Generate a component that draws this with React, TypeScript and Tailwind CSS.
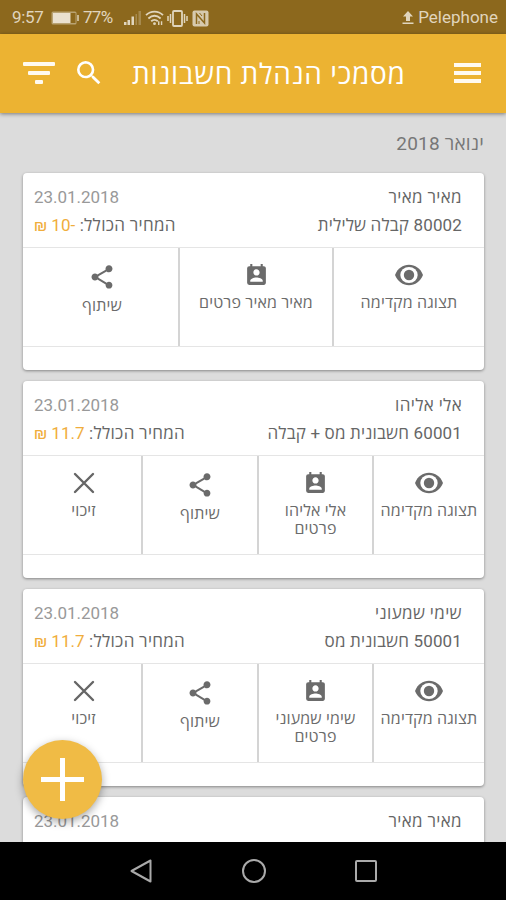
import type { ReactNode } from "react";
import { MdPermContactCalendar, MdSearch, MdShare } from "react-icons/md";

type Action = { kind: "view" | "contact" | "share" | "credit"; label: string };

type Doc = {
  id: number;
  name: string;
  date: string;
  title?: string;
  price?: string;
  actions?: Action[];
};

const documents: Doc[] = [
  {
    id: 1,
    name: "מאיר מאיר",
    date: "23.01.2018",
    title: "80002 קבלה שלילית",
    price: "₪ 10-",
    actions: [
      { kind: "view", label: "תצוגה מקדימה" },
      { kind: "contact", label: "מאיר מאיר פרטים" },
      { kind: "share", label: "שיתוף" },
    ],
  },
  {
    id: 2,
    name: "אלי אליהו",
    date: "23.01.2018",
    title: "60001 חשבונית מס + קבלה",
    price: "₪ 11.7",
    actions: [
      { kind: "view", label: "תצוגה מקדימה" },
      { kind: "contact", label: "אלי אליהו פרטים" },
      { kind: "share", label: "שיתוף" },
      { kind: "credit", label: "זיכוי" },
    ],
  },
  {
    id: 3,
    name: "שימי שמעוני",
    date: "23.01.2018",
    title: "50001 חשבונית מס",
    price: "₪ 11.7",
    actions: [
      { kind: "view", label: "תצוגה מקדימה" },
      { kind: "contact", label: "שימי שמעוני פרטים" },
      { kind: "share", label: "שיתוף" },
      { kind: "credit", label: "זיכוי" },
    ],
  },
  { id: 4, name: "מאיר מאיר", date: "23.01.2018" },
];

function EyeIcon() {
  return (
    <svg width="28" height="22" viewBox="0 0 28 22">
      <path d="M0 11C2.5 4.5 8 .8 14 .8S25.5 4.5 28 11C25.5 17.5 20 21.2 14 21.2S2.5 17.5 0 11Z" fill="#6b6b6b" />
      <ellipse cx="14" cy="11" rx="8.700" ry="8" fill="#fff" />
      <circle cx="14" cy="11" r="5.200" fill="#6b6b6b" />
    </svg>
  );
}

function CrossIcon() {
  return (
    <svg width="22" height="22" viewBox="0 0 22 22" stroke="#666" strokeWidth="2.4" strokeLinecap="round">
      <path d="M2 2l18 18M20 2L2 20" />
    </svg>
  );
}

const icons: Record<Action["kind"], ReactNode> = {
  view: <EyeIcon />,
  contact: <MdPermContactCalendar size={25} />,
  share: <MdShare size={28} className="mt-[3px]" />,
  credit: <CrossIcon />,
};

function StatusBar() {
  return (
    <div dir="ltr" className="flex h-[34px] shrink-0 items-center bg-[#8c681d] pt-[2px] pr-[8px] pl-[12px] text-[17px] text-[#e0d5bd]">
      <span className="w-[39px] tracking-[-0.3px]">9:57</span>
      <svg width="29" height="14" viewBox="0 0 29 14">
        <rect x=".5" y=".5" width="25" height="13" rx="1.5" fill="#b9a373" />
        <rect x="2" y="2" width="17" height="10" fill="#eae1cf" />
        <rect x="20" y="2" width="4.500" height="10" fill="#8c681d" />
        <path d="M26 4h2v6h-2z" fill="#c9b893" />
      </svg>
      <span className="ml-[3px] w-[41px] tracking-[-0.7px]">77%</span>
      <svg width="18" height="16" viewBox="0 0 18 16" fill="#e0d5bd">
        <path d="M0 12h2.500v3H0zM3.500 10H6v5H3.500zM7.500 6.500H10V15H7.500z" />
        <path d="M11.500 4H13v11h-1.500zM14.500 1H17v14h-2.500z" fill="#a68a4f" />
      </svg>
      <svg className="ml-[3px]" width="19" height="16" viewBox="0 0 20 17" fill="none" stroke="#e0d5bd" strokeWidth="2">
        <path d="M1 5.500C6 .5 14 .5 19 5.500M3.500 9c4-3.500 9-3.500 13 0M6.500 12c2-1.800 5-1.800 7 0" />
        <circle cx="10" cy="14.500" r="1.500" fill="#e0d5bd" stroke="none" />
        <path d="M14.500 12v4M17.500 12v4" strokeWidth="1.500" />
      </svg>
      <svg className="ml-[3px]" width="21" height="17" viewBox="0 0 21 17" fill="none" stroke="#e0d5bd" strokeWidth="1.800">
        <rect x="6" y="1" width="9" height="15" rx="1" />
        <path d="M3.500 4v9M1 6v5M17.500 4v9M20 6v5" strokeWidth="1.500" />
      </svg>
      <svg className="ml-[4px]" width="17" height="17" viewBox="0 0 17 17">
        <rect x=".5" y=".5" width="16" height="16" rx="2" fill="#d7caae" />
        <path d="M4.500 14V4l8 9V3" fill="none" stroke="#8c681d" strokeWidth="1.500" />
        <path d="M7.500 3l2.500 3M7 11v3" stroke="#8c681d" />
      </svg>
      <svg className="ml-auto" width="12" height="14" viewBox="0 0 12 14" fill="#e0d5bd">
        <path d="M6 0l5 5.500H8V10H4V5.500H1zM.5 11.500h11V13H.5z" />
      </svg>
      <span className="ml-[4px]">Pelephone</span>
    </div>
  );
}

function AppBar() {
  return (
    <header
      dir="ltr"
      className="z-10 flex h-[79px] shrink-0 items-center bg-[#ecb332] pr-[25px] pb-px pl-[22px] text-white shadow-[0_1px_4px_rgba(0,0,0,0.45)]"
    >
      <svg width="33" height="24" viewBox="0 0 33 24" fill="#fffaf0">
        <rect x="1" y="1" width="32" height="4" rx="1" />
        <rect x="6" y="10" width="22" height="4" rx="1" />
        <rect x="13" y="19" width="8" height="4" rx="1" />
      </svg>
      <MdSearch size={32} className="ml-[18px]" />
      <h1 dir="rtl" className="mt-[4px] ml-[27px] text-[28px] leading-none tracking-[0.7px] whitespace-nowrap">
        מסמכי הנהלת חשבונות
      </h1>
      <svg className="ml-auto" width="27" height="20" viewBox="0 0 27 20" fill="#fffaf0">
        <path d="M0 0h27v4H0zM0 8h27v4H0zM0 16h27v4H0z" />
      </svg>
    </header>
  );
}

function DocCard({ doc }: { doc: Doc }) {
  const cols =
    doc.actions?.length === 3 ? "grid-cols-[152px_154px_155px]" : "grid-cols-[112px_115px_116px_118px]";

  return (
    <article className="h-[197px] shrink-0 rounded-[4px] bg-white shadow-[0_1px_3px_rgba(0,0,0,0.4)]">
      <div className="flex h-[74px] flex-col pt-[10px] pr-[22px] pl-[11px] text-[17px] leading-[28px] text-[#666]">
        <div className="flex justify-between">
          <span className="tracking-[0.35px]">{doc.name}</span>
          <span className="tracking-[-0.05px] text-[#999]">{doc.date}</span>
        </div>
        {doc.title && (
          <div className="flex justify-between">
            <span className="tracking-[0.15px]">{doc.title}</span>
            <span className="tracking-[0.3px]">
              המחיר הכולל:{" "}
              <bdo dir="ltr" className="tracking-normal text-[#f0ad3c]">
                {doc.price}
              </bdo>
            </span>
          </div>
        )}
      </div>
      {doc.actions && (
        <div className={`grid h-[100px] border-y border-[#e5e5e5] ${cols}`}>
          {doc.actions.map((a) => (
            <button
              key={a.kind}
              type="button"
              className="flex flex-col items-center border-l-2 border-[#d4d4d4] px-[5px] pt-[12px] text-[#6b6b6b] last:border-l-0 last:pr-[4px] last:pl-[7px]"
            >
              <span className="flex h-[30px] items-center">{icons[a.kind]}</span>
              <span
                className={`text-[16px] leading-[18px] tracking-[0.15px] ${a.kind === "share" ? "mt-[7px]" : "mt-[4px]"}`}
              >
                {a.label}
              </span>
            </button>
          ))}
        </div>
      )}
    </article>
  );
}

export default function App() {
  return (
    <div
      dir="rtl"
      className="relative flex h-[900px] w-[506px] flex-col overflow-hidden bg-[#dcdcdc] font-[Roboto,'Open_Sans',sans-serif]"
    >
      <StatusBar />
      <AppBar />
      <main className="flex min-h-0 flex-1 flex-col gap-[11px] overflow-hidden pr-[22px] pl-[23px]">
        <h2 className="-mb-[11px] h-[60px] shrink-0 text-[19px] leading-[62px] tracking-[0.2px] text-[#777]">
          ינואר 2018
        </h2>
        {documents.map((doc) => (
          <DocCard key={doc.id} doc={doc} />
        ))}
      </main>
      <nav dir="ltr" className="flex h-[58px] shrink-0 items-center justify-center gap-[88px] bg-black">
        <svg width="24" height="24" viewBox="0 0 24 24" fill="none" stroke="#aaa" strokeWidth="2">
          <path d="M20.500 1.500v21L1.500 12z" strokeLinejoin="round" />
        </svg>
        <svg width="25" height="25" viewBox="0 0 25 25" fill="none" stroke="#aaa" strokeWidth="2">
          <circle cx="12" cy="12" r="11" />
        </svg>
        <svg width="22" height="22" viewBox="0 0 22 22" fill="none" stroke="#aaa" strokeWidth="2">
          <rect x="1" y="1" width="20" height="20" rx="1" />
        </svg>
      </nav>
      <button
        type="button"
        aria-label="הוספה"
        className="absolute top-[740px] left-[23px] z-20 flex size-[79px] items-center justify-center rounded-full bg-[#f0bb45] shadow-[0_3px_8px_rgba(0,0,0,0.35)]"
      >
        <svg width="43" height="43" viewBox="0 0 43 43" stroke="#fff" strokeWidth="5">
          <path d="M21.500 0v43M0 21.500h43" />
        </svg>
      </button>
    </div>
  );
}
